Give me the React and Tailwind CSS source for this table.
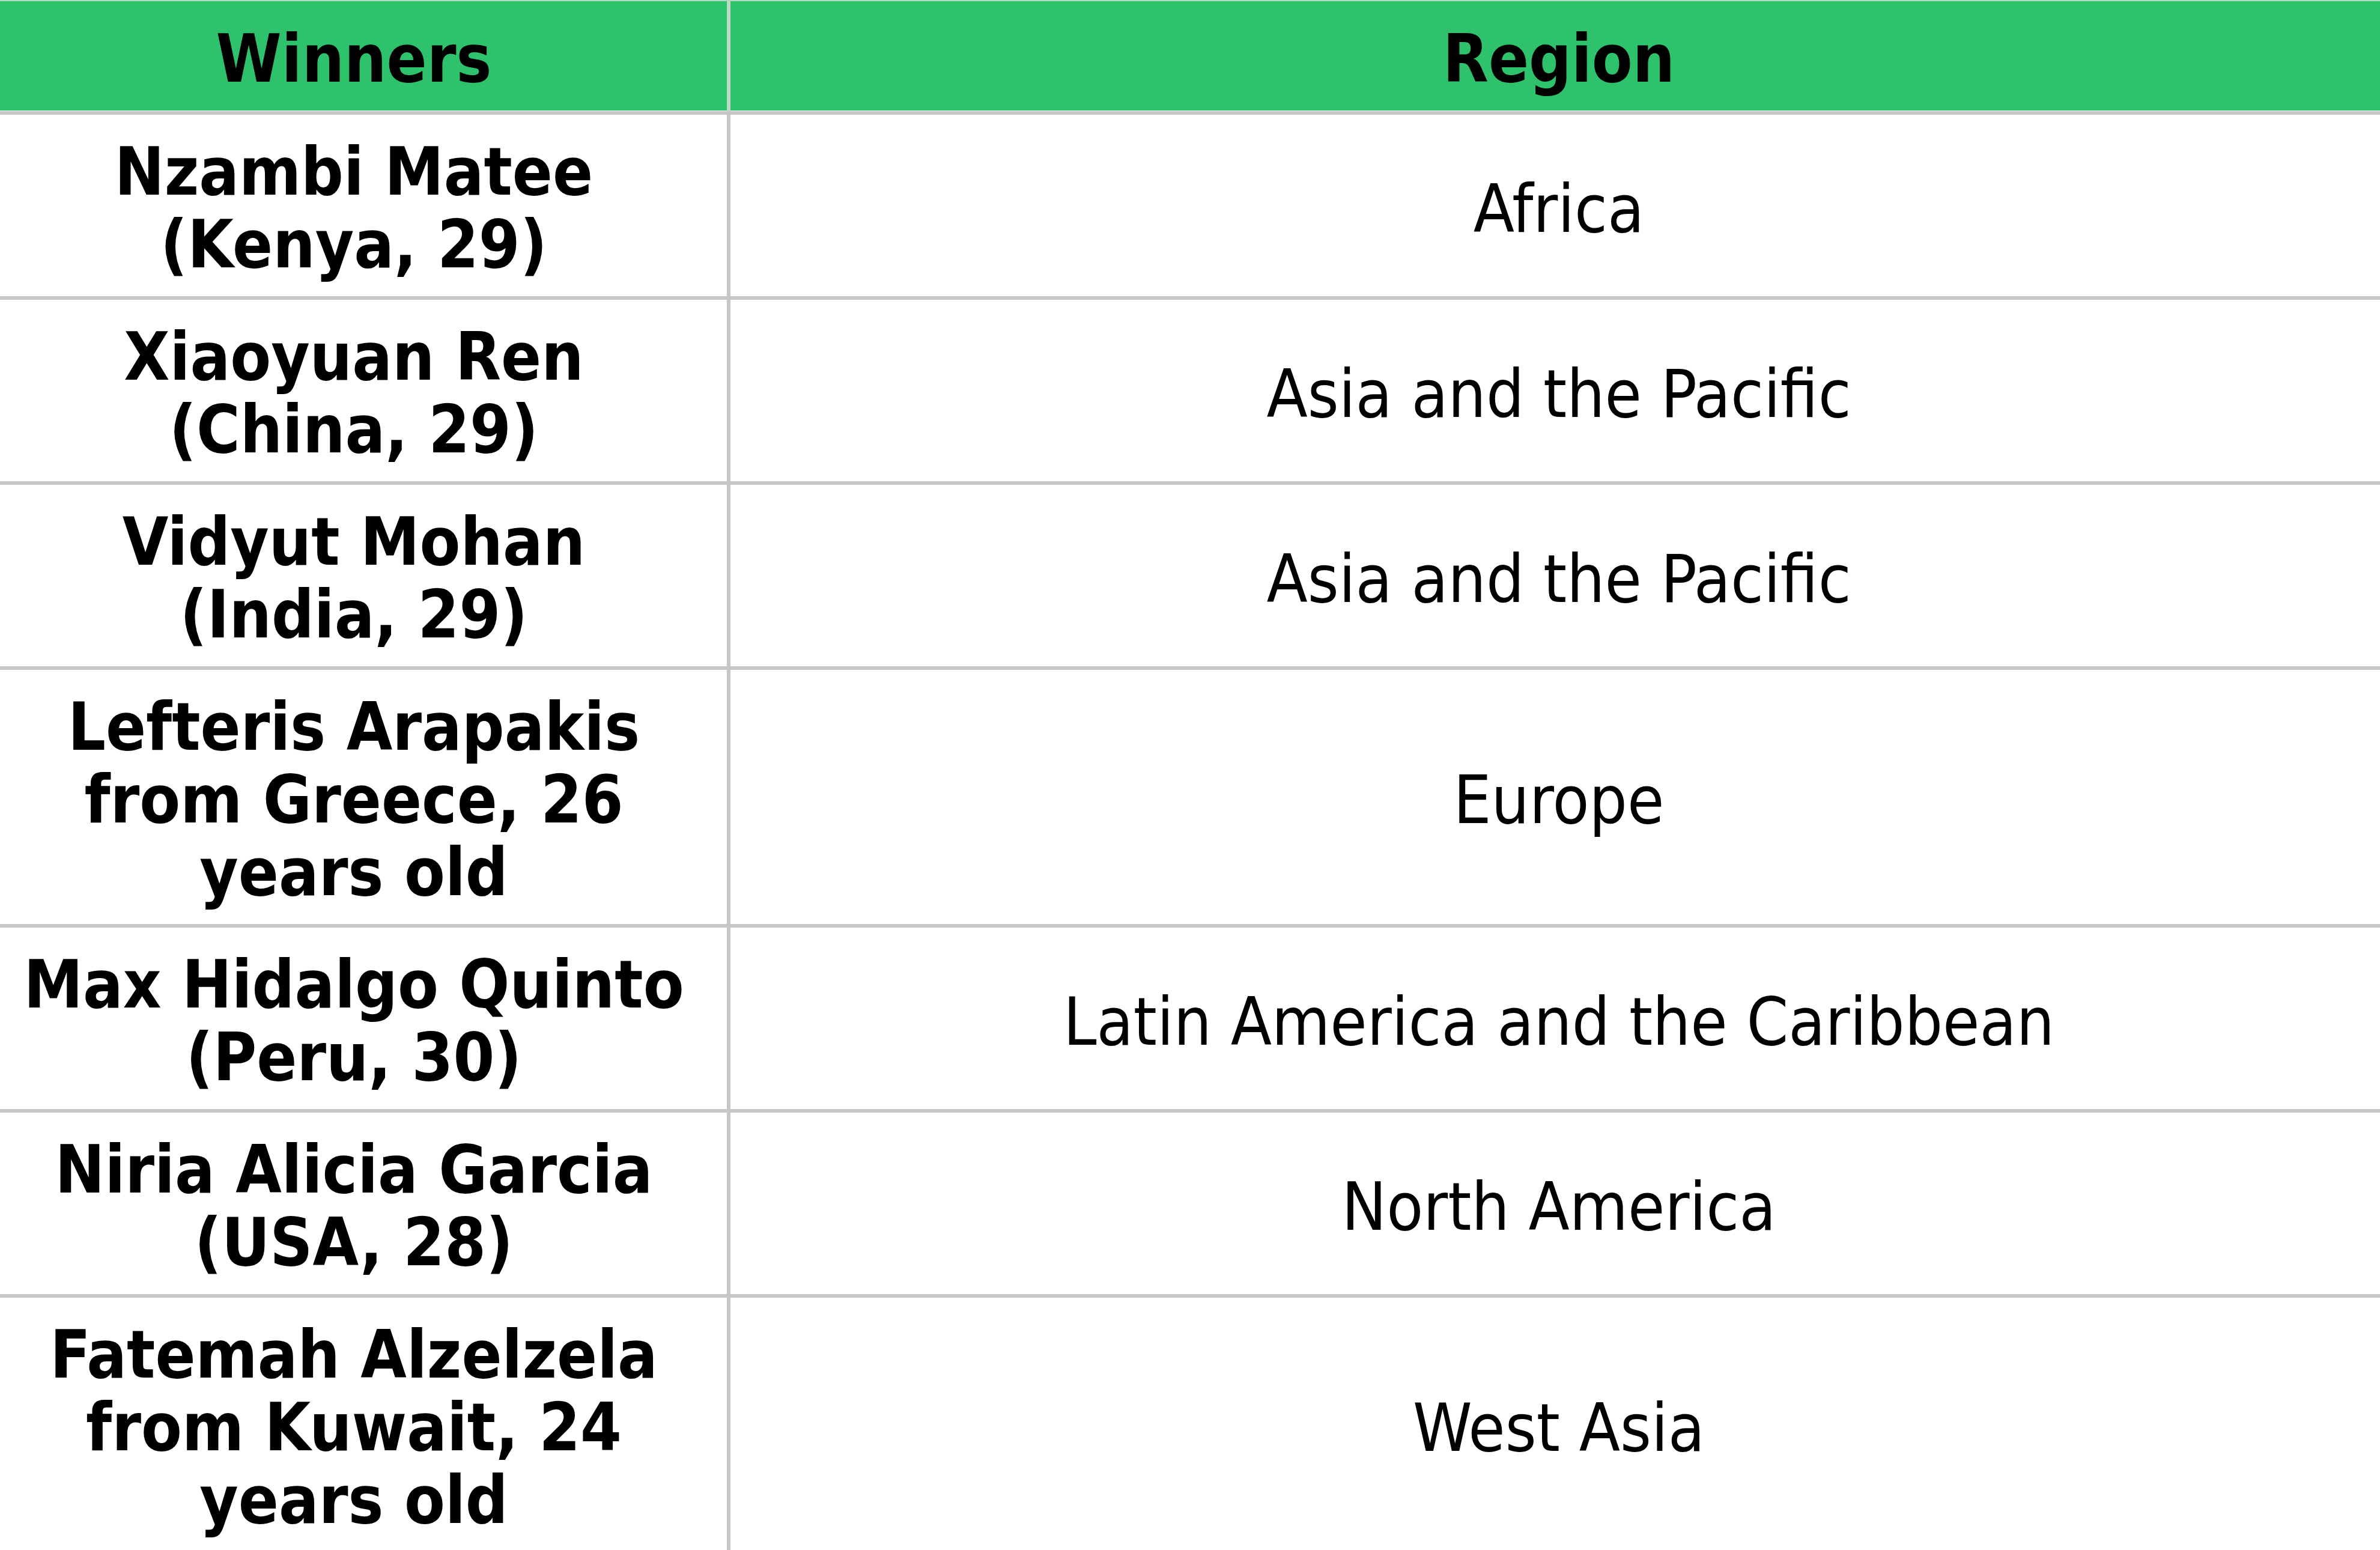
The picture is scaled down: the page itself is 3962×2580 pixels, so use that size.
import React from 'react';

const winners = [
  { name: ['Nzambi Matee', '(Kenya, 29)'], region: 'Africa' },
  { name: ['Xiaoyuan Ren', '(China, 29)'], region: 'Asia and the Pacific' },
  { name: ['Vidyut Mohan', '(India, 29)'], region: 'Asia and the Pacific' },
  { name: ['Lefteris Arapakis', 'from Greece, 26', 'years old'], region: 'Europe' },
  { name: ['Max Hidalgo Quinto', '(Peru, 30)'], region: 'Latin America and the Caribbean' },
  { name: ['Niria Alicia Garcia', '(USA, 28)'], region: 'North America' },
  { name: ['Fatemah Alzelzela', 'from Kuwait, 24', 'years old'], region: 'West Asia' },
];

const font = "font-['DejaVu_Sans_Condensed','DejaVu_Sans',Verdana,sans-serif] font-stretch-condensed";

export default function App() {
  return (
    <div className={`w-[3962px] h-[2580px] overflow-hidden bg-white text-black text-[110px] leading-[121px] ${font}`}>
      {/* header */}
      <div className="flex border-t-2 border-[#b6d8c3]">
        <div className="w-[1216px] shrink-0 bg-[#2fc26c] border-r-[6px] border-[#bfd8c6] pr-[32px] pt-[36px] pb-[26px] text-center font-bold shadow-[inset_0_-1px_0_#ffffff]">
          Winners
        </div>
        <div className="flex-1 bg-[#2fc26c] pl-[12px] pt-[36px] pb-[26px] text-center font-bold shadow-[inset_0_-1px_0_#ffffff]">
          Region
        </div>
      </div>
      <div className="h-[6px] bg-[#c6c6c6]" />

      {winners.map((w, i) => (
        <div key={i} className="flex border-b-[6px] border-[#c6c6c6]">
          <div className="w-[1216px] shrink-0 border-r-[6px] border-[#c6c6c6] pr-[32px] pt-[35px] pb-[25px] text-center font-bold whitespace-nowrap">
            {w.name.map((line, j) => (
              <div key={j}>{line}</div>
            ))}
          </div>
          <div className="flex-1 flex items-center justify-center pl-[12px] pt-[35px] pb-[25px] text-[111px] whitespace-nowrap">
            {w.region}
          </div>
        </div>
      ))}
    </div>
  );
}
